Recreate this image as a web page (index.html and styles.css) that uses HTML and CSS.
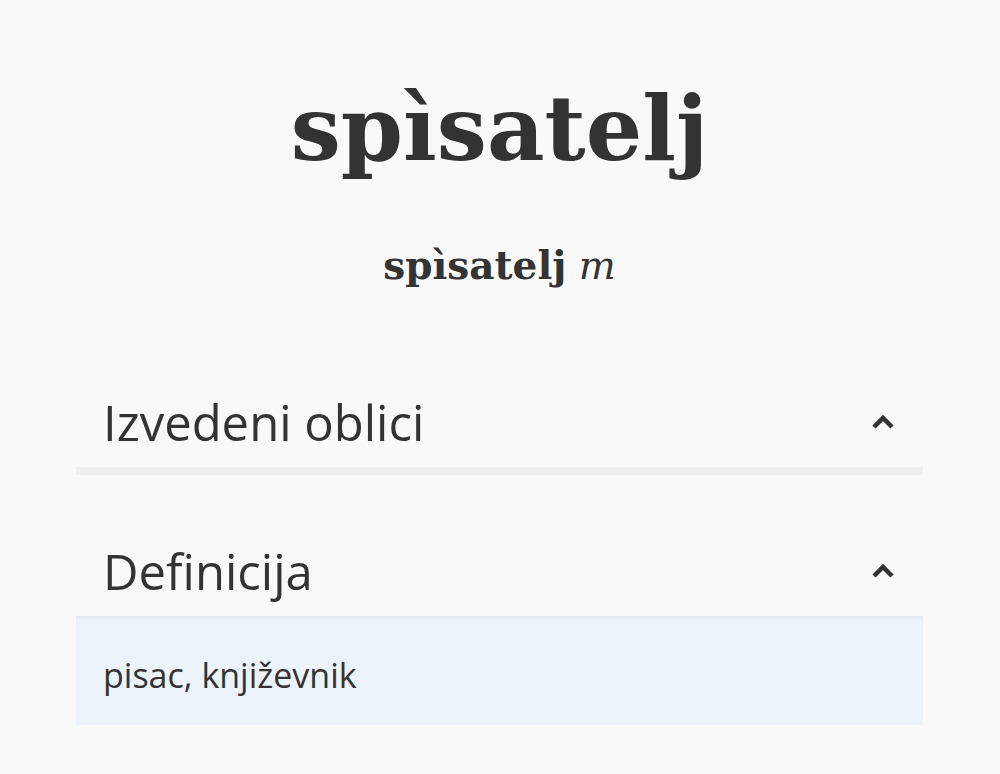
FILE: index.html
```html
<!DOCTYPE html>
<html lang="hr">
<head>
<meta charset="utf-8">
<title>spìsatelj</title>
<link rel="stylesheet" href="styles.css">
</head>
<body>
<main class="page">
  <h1 class="title">spìsatelj</h1>
  <p class="lemma"><b>spìsatelj</b> <i>m</i></p>

  <section class="panel panel-first">
    <div class="panel-head">
      <h2>Izvedeni oblici</h2>
      <svg class="chev" width="24" height="16" viewBox="0 0 24 16"><polyline points="3,13 12,4 21,13" fill="none" stroke="#333" stroke-width="4.5" stroke-linejoin="miter"/></svg>
    </div>
    <div class="panel-rule"></div>
  </section>

  <section class="panel">
    <div class="panel-head">
      <h2>Definicija</h2>
      <svg class="chev" width="24" height="16" viewBox="0 0 24 16"><polyline points="3,13 12,4 21,13" fill="none" stroke="#333" stroke-width="4.5" stroke-linejoin="miter"/></svg>
    </div>
    <div class="panel-body">pisac, književnik</div>
  </section>
</main>
</body>
</html>
```
FILE: styles.css
```css
html, body {
  margin: 0;
  padding: 0;
  background: #f9f9f9;
}
body {
  color: #333;
  font-family: "Open Sans", sans-serif;
}
.page {
  padding: 0 77px 0 76px;
}
.title {
  margin: 0;
  padding-top: 67px;
  text-align: center;
  font-family: "DejaVu Serif", serif;
  font-weight: bold;
  font-size: 89px;
  line-height: 124px;
  color: #333;
}
.lemma {
  margin: 0;
  padding-top: 49px;
  text-align: center;
  font-family: "DejaVu Serif", serif;
  font-size: 39px;
  line-height: 50px;
  color: #333;
}
.lemma i {
  font-weight: normal;
}
.panel-first {
  margin-top: 86px;
}
.panel-head {
  display: flex;
  align-items: center;
  justify-content: space-between;
  padding: 0 28px 0 27px;
  height: 90px;
}
.panel-head h2 {
  margin: 0;
  font-weight: normal;
  font-size: 49px;
  line-height: 60px;
  color: #333;
}
.chev {
  display: block;
}
.panel-rule {
  height: 8px;
  background: #efefef;
  margin-bottom: 51px;
}
.panel-body {
  background: #edf3fa;
  padding: 38px 27px 29px;
  font-size: 34px;
  line-height: 42px;
  box-shadow: inset 0 4px 4px -2px rgba(0,0,0,0.05);
}
```
